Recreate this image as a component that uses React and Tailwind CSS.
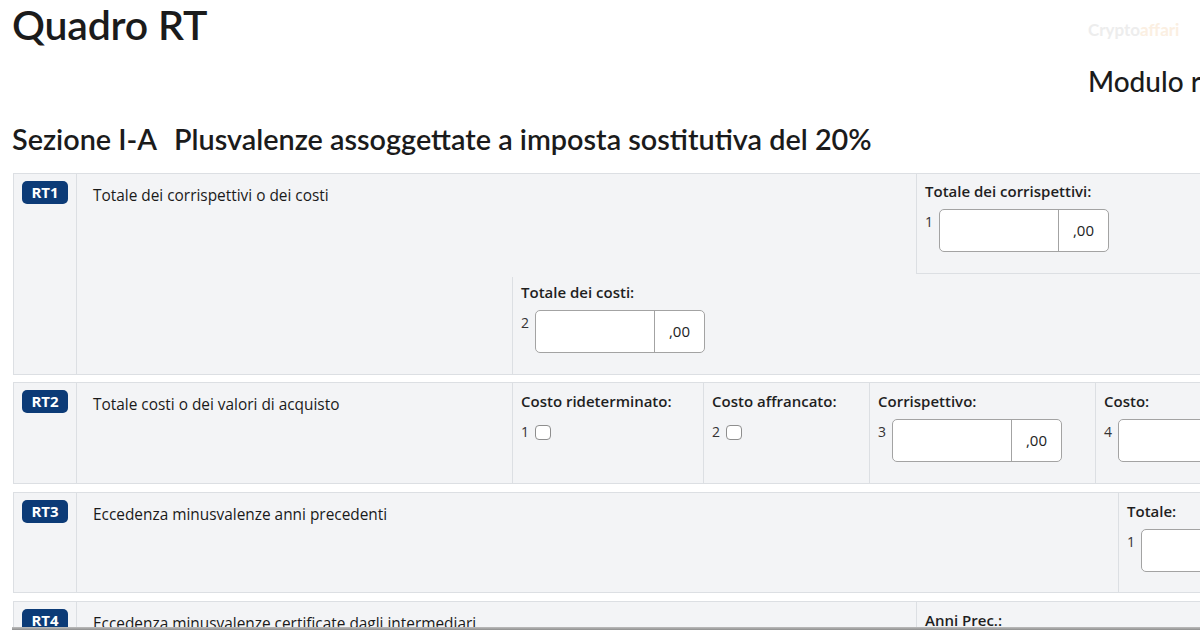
import React from "react";

const Badge = ({ children }) => (
  <div className="w-[46px] h-[23px] rounded-[5px] bg-[#0c3b77] text-white text-[15px] font-bold flex items-center justify-center leading-none">
    {children}
  </div>
);

const Num = ({ n }) => (
  <span className="w-[14px] shrink-0 text-[14px] leading-5 pt-[3px] text-[#333]">{n}</span>
);

const MoneyInput = ({ n, decimals = true }) => (
  <div className="flex items-start mt-2">
    <Num n={n} />
    <div className="w-[170px] h-[43px] border border-[#a3a3a3] rounded-[5px] bg-white flex shrink-0">
      <div className="flex-1" />
      {decimals && (
        <div className="w-[50px] border-l border-[#a3a3a3] flex items-center justify-center text-[15px] text-[#222]">
          ,00
        </div>
      )}
    </div>
  </div>
);

const Check = ({ n }) => (
  <div className="flex items-center mt-[13px] h-[16px]">
    <span className="w-[14px] shrink-0 text-[14px] leading-none text-[#333]">{n}</span>
    <div className="w-[16px] h-[15px] border border-[#8e8e8e] rounded-[4px] bg-white" />
  </div>
);

const Label = ({ children }) => (
  <div className="text-[15px] leading-5 font-semibold text-[#1f1f1f] whitespace-nowrap">{children}</div>
);

const Row = ({ code, h, children }) => (
  <div className={`flex border border-[#dcdfe3] bg-[#f3f4f6] ${h}`}>
    <div className="w-[63px] shrink-0 border-r border-[#dcdfe3] pt-[7px] pl-[8px]">
      <Badge>{code}</Badge>
    </div>
    {children}
  </div>
);

const Desc = ({ children, w }) => (
  <div className={`${w} shrink-0 pl-4 pt-3 text-[15.4px] leading-5 font-medium text-[#1a1a1a] whitespace-nowrap`}>
    {children}
  </div>
);

export default function App() {
  return (
    <div className="w-[1200px] h-[630px] overflow-hidden bg-white relative font-['Open_Sans',sans-serif] text-[#1b1b1b]">
      <div className="w-[1500px]">
        <h1 className="pl-[12px] pt-[1px] font-['Lato',sans-serif] text-[41px] leading-[48px] font-semibold tracking-[-0.2px]">Quadro RT</h1>
        <div className="pl-[1088px] mt-[15px] font-['Lato',sans-serif] text-[28px] leading-[34px] font-medium whitespace-nowrap">
          Modulo redditi
        </div>
        <h2 className="pl-[12px] mt-[24px] font-['Lato',sans-serif] text-[28.8px] leading-[34px] font-semibold whitespace-nowrap">
          Sezione I-A<span className="ml-[17px]">Plusvalenze assoggettate a imposta sostitutiva del 20%</span>
        </h2>

        <div className="pl-[13px] mt-[17px] w-[1500px] flex flex-col">
          <Row code="RT1" h="h-[202px]">
            <div className="flex-1 flex flex-col">
              <div className="flex h-[100px]">
                <Desc w="w-[839px]">Totale dei corrispettivi o dei costi</Desc>
                <div className="w-[320px] border-l border-b border-[#dcdfe3] px-2 pt-[7px]">
                  <Label>Totale dei corrispettivi:</Label>
                  <MoneyInput n="1" />
                </div>
              </div>
              <div className="flex flex-1 pt-[3px]">
                <div className="w-[435px] shrink-0" />
                <div className="w-[191px] border-l border-[#dcdfe3] px-2 pt-[5px]">
                  <Label>Totale dei costi:</Label>
                  <MoneyInput n="2" />
                </div>
              </div>
            </div>
          </Row>

          <div className="h-[7px]" />

          <Row code="RT2" h="h-[102px]">
            <div className="flex-1 flex">
              <Desc w="w-[435px]">Totale costi o dei valori di acquisto</Desc>
              <div className="w-[191px] shrink-0 border-l border-[#dcdfe3] px-2 pt-2">
                <Label>Costo rideterminato:</Label>
                <Check n="1" />
              </div>
              <div className="w-[166px] shrink-0 border-l border-[#dcdfe3] px-2 pt-2">
                <Label>Costo affrancato:</Label>
                <Check n="2" />
              </div>
              <div className="w-[226px] shrink-0 border-l border-[#dcdfe3] px-2 pt-2">
                <Label>Corrispettivo:</Label>
                <MoneyInput n="3" />
              </div>
              <div className="w-[226px] shrink-0 border-l border-[#dcdfe3] px-2 pt-2">
                <Label>Costo:</Label>
                <MoneyInput n="4" />
              </div>
            </div>
          </Row>

          <div className="h-[8px]" />

          <Row code="RT3" h="h-[101px]">
            <div className="flex-1 flex">
              <Desc w="w-[1041px]">Eccedenza minusvalenze anni precedenti</Desc>
              <div className="w-[226px] shrink-0 border-l border-[#dcdfe3] px-2 pt-2">
                <Label>Totale:</Label>
                <MoneyInput n="1" />
              </div>
            </div>
          </Row>

          <div className="h-[8px]" />

          <Row code="RT4" h="h-[101px]">
            <div className="flex-1 flex">
              <Desc w="w-[839px]">Eccedenza minusvalenze certificate dagli intermediari</Desc>
              <div className="w-[226px] shrink-0 border-l border-[#dcdfe3] px-2 pt-2">
                <Label>Anni Prec.:</Label>
                <MoneyInput n="1" />
              </div>
            </div>
          </Row>
        </div>
      </div>

      <div className="absolute left-[1088px] top-[17px] font-['Lato',sans-serif] text-[17px] font-bold text-[#ededed] whitespace-nowrap select-none">
        Crypto<span className="text-[#fbefe2]">affari</span>
      </div>
      <div className="absolute bottom-0 left-[12px] right-0 h-[3px] bg-gradient-to-b from-[#bdbdbd] to-[#8f8f8f]" />
    </div>
  );
}
